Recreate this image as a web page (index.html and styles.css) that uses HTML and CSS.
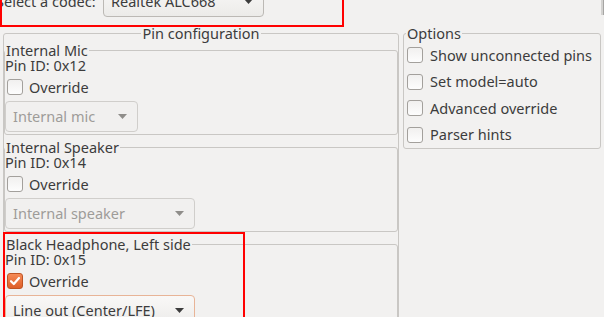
FILE: index.html
```html
<!DOCTYPE html>
<html lang="en">
<head>
  <meta charset="UTF-8">
  <title>Pin configuration</title>
  <link rel="stylesheet" href="styles.css">
</head>
<body>
  <!-- codec selector -->
  <div class="codec-row">
    <span class="codec-label">Select a codec:</span>
    <div class="combo combo-codec">
      <span>Realtek ALC668</span>
      <svg class="arrow" width="9" height="5" viewBox="0 0 9 5"><path d="M0 0h9L4.5 5z"/></svg>
    </div>
    <span class="edge"></span>
  </div>

  <div class="main">
    <fieldset class="frame pins">
      <legend>Pin configuration</legend>

      <fieldset class="frame pin">
        <legend>Internal Mic</legend>
        <div class="pin-id">Pin ID: 0x12</div>
        <label class="check"><span class="box"></span>Override</label>
        <div class="combo disabled narrow">
          <span>Internal mic</span>
          <svg class="arrow" width="9" height="5" viewBox="0 0 9 5"><path d="M0 0h9L4.5 5z"/></svg>
        </div>
      </fieldset>

      <fieldset class="frame pin">
        <legend>Internal Speaker</legend>
        <div class="pin-id">Pin ID: 0x14</div>
        <label class="check"><span class="box"></span>Override</label>
        <div class="combo disabled wide">
          <span>Internal speaker</span>
          <svg class="arrow" width="9" height="5" viewBox="0 0 9 5"><path d="M0 0h9L4.5 5z"/></svg>
        </div>
      </fieldset>

      <fieldset class="frame pin">
        <legend>Black Headphone, Left side</legend>
        <div class="pin-id">Pin ID: 0x15</div>
        <label class="check">
          <span class="box on">
            <svg width="14" height="14" viewBox="0 0 14 14"><path d="M3 7.2l2.8 2.8 5.2-6" fill="none" stroke="#fff" stroke-width="2.2" stroke-linecap="round" stroke-linejoin="round"/></svg>
          </span>Override
        </label>
        <div class="combo focused wide">
          <span>Line out (Center/LFE)</span>
          <svg class="arrow" width="9" height="5" viewBox="0 0 9 5"><path d="M0 0h9L4.5 5z"/></svg>
        </div>
      </fieldset>
    </fieldset>

    <fieldset class="frame options">
      <legend>Options</legend>
      <label class="check opt"><span class="box"></span>Show unconnected pins</label>
      <label class="check opt"><span class="box"></span>Set model=auto</label>
      <label class="check opt"><span class="box"></span>Advanced override</label>
      <label class="check opt"><span class="box"></span>Parser hints</label>
    </fieldset>
  </div>

  <!-- red annotation boxes -->
  <div class="mark mark-codec"></div>
  <div class="mark mark-headphone"></div>
</body>
</html>
```

FILE: styles.css
```css
* {
  box-sizing: border-box;
}

body {
  margin: 0;
  height: 317px;
  overflow: hidden;
  position: relative;
  background: #f2f1f0;
  color: #3c3c3c;
  font-family: "Noto Sans", sans-serif;
  font-size: 14.5px;
  line-height: 17px;
}

/* Codec row, partly scrolled off the top */
.codec-row {
  display: flex;
  align-items: center;
  height: 31px;
  margin-top: -14px;
}

.codec-label {
  flex: none;
  width: 107px;
  margin-left: -4px;
  white-space: nowrap;
}

.edge {
  margin-left: auto;
  align-self: flex-start;
  width: 3px;
  height: 29px;
  background: #d3d2d0;
  border-right: 1px solid #a6a5a3;
}

/* Combo boxes */
.combo {
  display: flex;
  align-items: center;
  justify-content: space-between;
  flex: none;
  height: 31px;
  padding: 0 10px 0 7px;
  border: 1px solid #bcb9b5;
  border-radius: 4px;
  background: linear-gradient(#f9f8f7, #ecebe9);
  white-space: nowrap;
}

.combo .arrow {
  fill: #3c3c3c;
  flex: none;
}

.combo-codec {
  width: 161px;
}

.combo.disabled {
  color: #9e9c99;
  border-color: #d0cecb;
  background: #f1f0ef;
}

.combo.disabled .arrow {
  fill: #8f8d8a;
}

.combo.focused {
  border-color: #e8b497;
}

.narrow {
  width: 133px;
}

.wide {
  width: 190px;
}

/* Frames */
.main {
  display: flex;
  align-items: flex-start;
  margin-top: 9px;
}

.frame {
  margin: 0;
  padding: 0;
  min-width: 0;
  border: 1px solid #c9c7c4;
  border-radius: 3px;
}

.frame legend {
  padding: 0 1px;
  line-height: 15px;
  white-space: nowrap;
}

.pins {
  margin-left: 3px;
  width: 396px;
}

.pins > legend {
  margin: 0 auto;
}

.pin {
  margin: 0 0 5px;
  padding: 0 0 2px;
}

.pin:first-of-type {
  margin-top: 2px;
}

.pin .combo {
  margin-top: 4px;
}

.pin-id {
  line-height: 15px;
}

.options {
  margin-left: 4px;
  width: 198px;
  padding-top: 1px;
}

.options > legend {
  margin-left: 2px;
}

/* Check boxes */
.check {
  display: flex;
  align-items: center;
  gap: 6px;
  height: 20px;
  margin-top: 4px;
  padding-left: 2px;
  white-space: nowrap;
}

.check.opt {
  height: 26.5px;
  margin-top: 0;
  padding-left: 3px;
  gap: 7px;
}

.box {
  display: flex;
  align-items: center;
  justify-content: center;
  flex: none;
  width: 16px;
  height: 16px;
  border: 1px solid #a3a09c;
  border-radius: 3px;
  background: linear-gradient(#f1f0ef, #fdfdfd);
}

.box.on {
  border-color: #bf5423;
  background: linear-gradient(#f58a56, #de5f29);
}

/* Annotation overlays */
.mark {
  position: absolute;
  border: 2px solid #ff0000;
}

.mark-codec {
  left: 0;
  top: -10px;
  width: 344px;
  height: 37px;
}

.mark-headphone {
  left: 3px;
  top: 232px;
  width: 242px;
  height: 100px;
}
```
